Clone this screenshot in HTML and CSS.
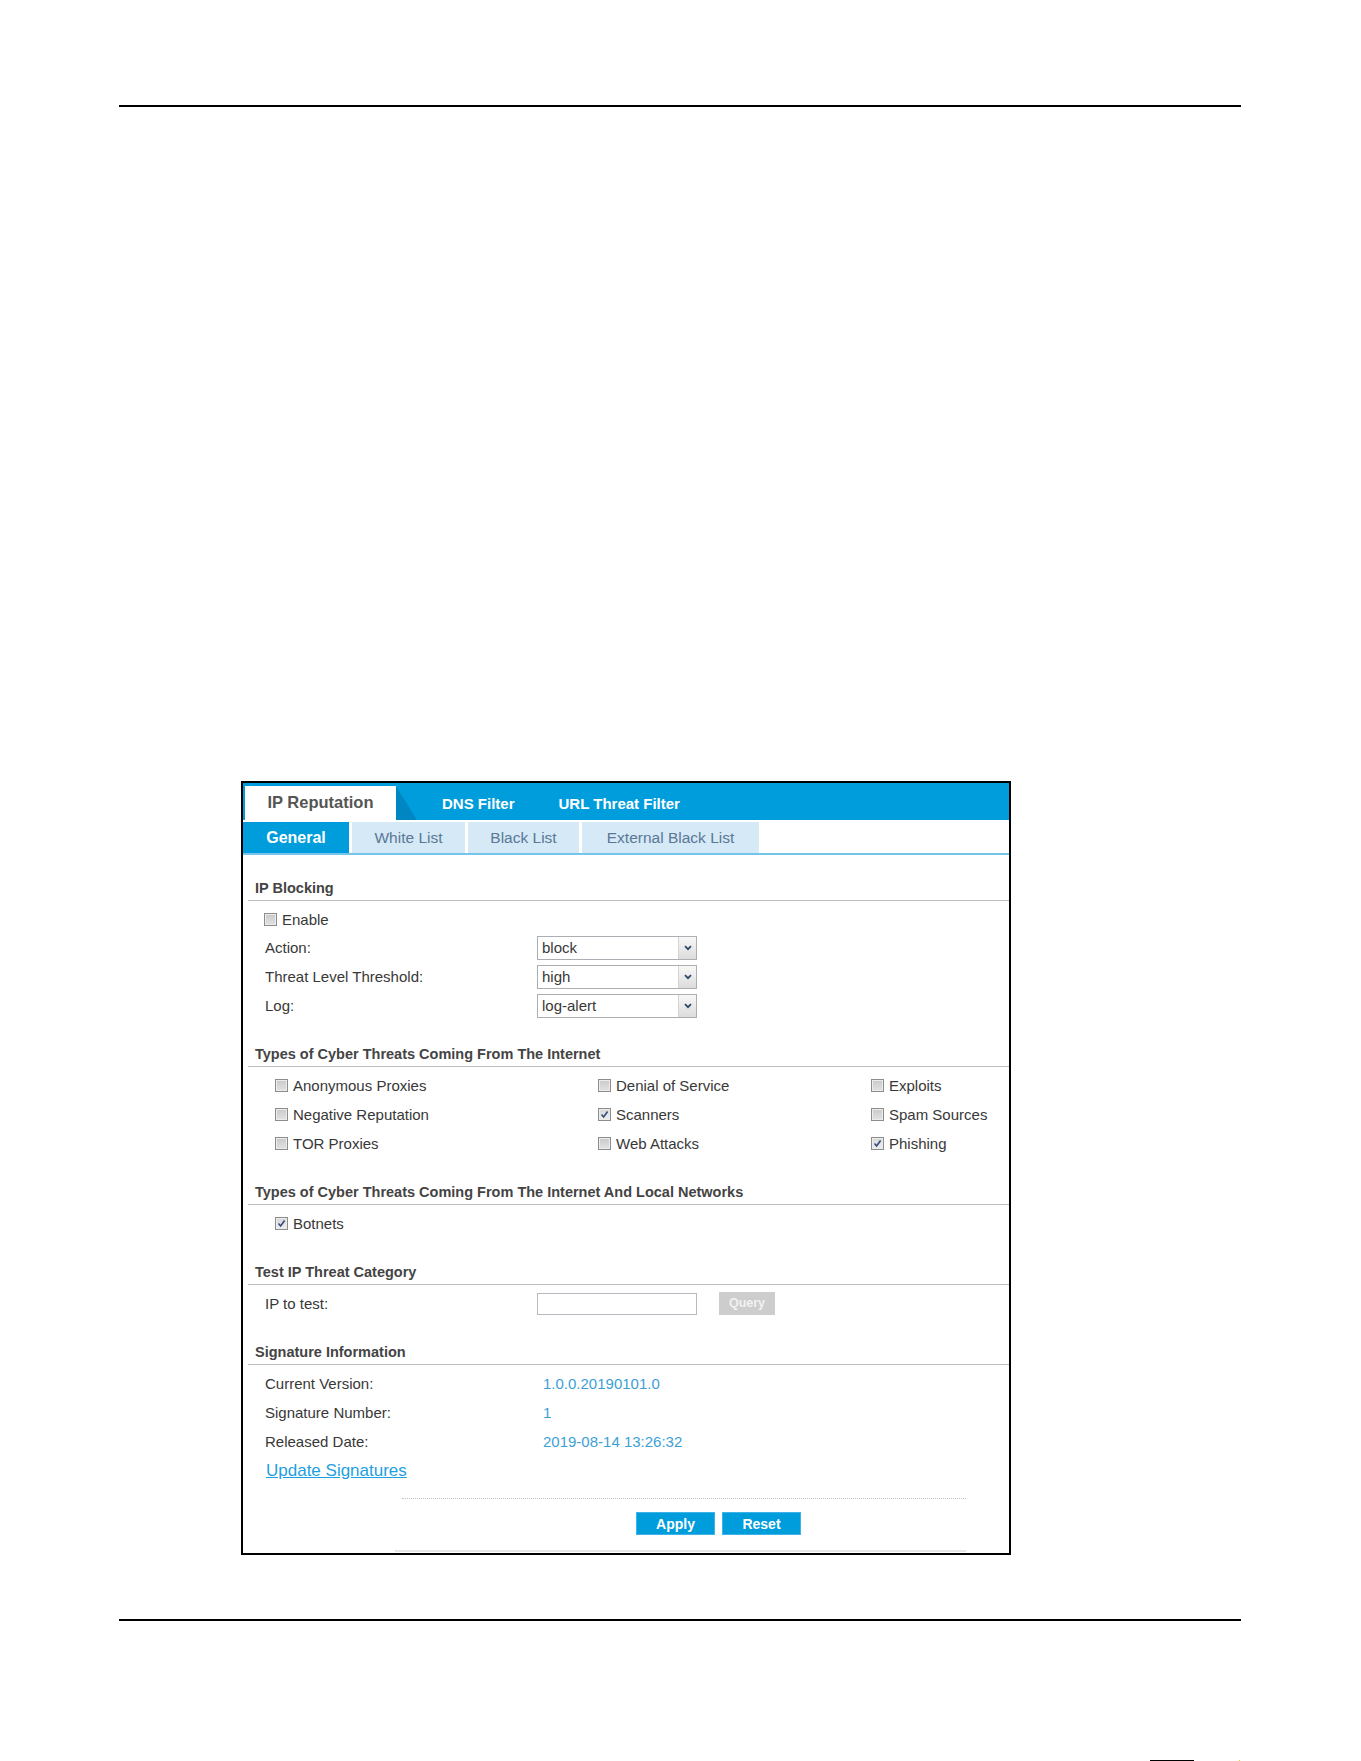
FILE: index.html
```html
<!DOCTYPE html>
<html lang="en">
  <head>
    <meta charset="UTF-8" />
    <meta name="viewport" content="width=device-width, initial-scale=1.0" />
    <title>IP Reputation</title>
    <link rel="stylesheet" href="styles.css">
  </head>
  <body>
    <div class="page">
      <div class="rule rule-top"></div>

      <div class="shot">
        <!-- hovedfaner -->
        <nav class="tabs">
          <span class="tab valgt">IP Reputation</span>
          <span class="slant"></span>
          <span class="tab first">DNS Filter</span>
          <span class="tab">URL Threat Filter</span>
        </nav>
        <!-- underfaner -->
        <nav class="subtabs">
          <span class="subtab valgt general">General</span>
          <span class="subtab white">White List</span>
          <span class="subtab black">Black List</span>
          <span class="subtab external">External Black List</span>
        </nav>

        <section class="group">
          <h3>IP Blocking</h3>
          <div class="rows">
            <div class="row short">
              <label class="check"><span class="cb"></span>Enable</label>
            </div>
            <div class="row">
              <span class="label">Action:</span>
              <span class="select"><span class="val">block</span><span class="arrow"><svg width="8" height="6" viewBox="0 0 8 6"><polyline points="1,1.2 4,4.2 7,1.2" fill="none" stroke="#30466a" stroke-width="1.8"/></svg></span></span>
            </div>
            <div class="row">
              <span class="label">Threat Level Threshold:</span>
              <span class="select"><span class="val">high</span><span class="arrow"><svg width="8" height="6" viewBox="0 0 8 6"><polyline points="1,1.2 4,4.2 7,1.2" fill="none" stroke="#30466a" stroke-width="1.8"/></svg></span></span>
            </div>
            <div class="row">
              <span class="label">Log:</span>
              <span class="select"><span class="val">log-alert</span><span class="arrow"><svg width="8" height="6" viewBox="0 0 8 6"><polyline points="1,1.2 4,4.2 7,1.2" fill="none" stroke="#30466a" stroke-width="1.8"/></svg></span></span>
            </div>
          </div>
        </section>

        <section class="group">
          <h3>Types of Cyber Threats Coming From The Internet</h3>
          <div class="rows grid">
            <label class="check"><span class="cb"></span>Anonymous Proxies</label>
            <label class="check"><span class="cb"></span>Denial of Service</label>
            <label class="check"><span class="cb"></span>Exploits</label>
            <label class="check"><span class="cb"></span>Negative Reputation</label>
            <label class="check"><span class="cb on"><svg width="11" height="11" viewBox="0 0 11 11"><polyline points="2.5,5.5 4.6,8 8.6,2.6" fill="none" stroke="#34497a" stroke-width="1.6"/></svg></span>Scanners</label>
            <label class="check"><span class="cb"></span>Spam Sources</label>
            <label class="check"><span class="cb"></span>TOR Proxies</label>
            <label class="check"><span class="cb"></span>Web Attacks</label>
            <label class="check"><span class="cb on"><svg width="11" height="11" viewBox="0 0 11 11"><polyline points="2.5,5.5 4.6,8 8.6,2.6" fill="none" stroke="#34497a" stroke-width="1.6"/></svg></span>Phishing</label>
          </div>
        </section>

        <section class="group">
          <h3>Types of Cyber Threats Coming From The Internet And Local Networks</h3>
          <div class="rows">
            <div class="row indent">
              <label class="check"><span class="cb on"><svg width="11" height="11" viewBox="0 0 11 11"><polyline points="2.5,5.5 4.6,8 8.6,2.6" fill="none" stroke="#34497a" stroke-width="1.6"/></svg></span>Botnets</label>
            </div>
          </div>
        </section>

        <section class="group">
          <h3>Test IP Threat Category</h3>
          <div class="rows">
            <div class="row">
              <span class="label">IP to test:</span>
              <span class="input"></span>
              <span class="query">Query</span>
            </div>
          </div>
        </section>

        <section class="group">
          <h3>Signature Information</h3>
          <div class="rows">
            <div class="row">
              <span class="label wide">Current Version:</span>
              <span class="value">1.0.0.20190101.0</span>
            </div>
            <div class="row">
              <span class="label wide">Signature Number:</span>
              <span class="value">1</span>
            </div>
            <div class="row">
              <span class="label wide">Released Date:</span>
              <span class="value">2019-08-14 13:26:32</span>
            </div>
            <div class="row">
              <a class="link" href="#">Update Signatures</a>
            </div>
          </div>
        </section>

        <div class="footer">
          <div class="dots"></div>
          <div class="buttons">
            <button>Apply</button>
            <button>Reset</button>
          </div>
          <div class="footline"></div>
        </div>
      </div>

      <div class="rule rule-bottom"></div>

      <div class="edge">
        <span class="edge-line"></span>
        <span class="edge-dot"></span>
      </div>
    </div>
  </body>
</html>
```

FILE: styles.css
```css
* {
  box-sizing: border-box;
  margin: 0;
  padding: 0;
}

body {
  background-color: #fff;
  font-family: "Liberation Sans", Arial, sans-serif;
  font-size: 15px;
  color: #383838;
}

.page {
  width: 1361px;
  height: 1761px;
  overflow: hidden;
}

/* sidens linjer top og bund */
.rule {
  height: 2px;
  width: 1122px;
  margin-left: 119px;
  background-color: #000;
}
.rule-top {
  margin-top: 105px;
}
.rule-bottom {
  margin-top: 64px;
}

.shot {
  width: 770px;
  margin: 674px 0 0 241px;
  border: 2px solid #000;
  padding-bottom: 1px;
}

/* hovedfaner */
.tabs {
  display: flex;
  align-items: flex-end;
  height: 37px;
  background-color: #009ddc;
}
.tab {
  height: 34px;
  line-height: 35px;
  padding: 0 22px;
  font-size: 15px;
  font-weight: bold;
  color: #fff;
}
.tab.first {
  margin-left: 3px;
}
.tab.valgt {
  width: 151px;
  margin-left: 2px;
  padding: 0;
  text-align: center;
  line-height: 33px;
  font-size: 16.5px;
  color: #555;
  background-color: #fff;
}
.slant {
  width: 0;
  height: 0;
  border-bottom: 34px solid #0087c3;
  border-right: 21px solid transparent;
}

/* underfaner */
.subtabs {
  display: flex;
  gap: 3px;
  margin-top: 2px;
  height: 33px;
  border-bottom: 2px solid #74c4ec;
}
.subtab {
  height: 31px;
  line-height: 31px;
  text-align: center;
  font-size: 15.5px;
  color: #5b7895;
  background-color: #d5e9f7;
}
.subtab.valgt {
  font-size: 16px;
  font-weight: bold;
  color: #fff;
  background-color: #009ddc;
}
.general {
  width: 106px;
}
.white {
  width: 113px;
}
.black {
  width: 111px;
}
.external {
  width: 177px;
}

/* sektioner */
.group {
  margin-top: 21px;
}
.group + .group {
  margin-top: 22px;
}
h3 {
  height: 25px;
  line-height: 24px;
  margin-left: 5px;
  padding-left: 7px;
  border-bottom: 1px solid #bdbdbd;
  font-size: 14.5px;
  font-weight: bold;
  color: #444;
}
.rows {
  padding-top: 4px;
}
.row {
  display: flex;
  align-items: center;
  height: 29px;
  padding-left: 22px;
}
.row.short {
  height: 28px;
  padding-left: 21px;
}
.row.indent {
  padding-left: 32px;
}
.label {
  width: 272px;
}
.label.wide {
  width: 275px;
}

.grid {
  display: grid;
  grid-template-columns: 323px 273px auto;
  grid-auto-rows: 29px;
  padding-left: 32px;
}

.check {
  display: flex;
  align-items: center;
}
.cb {
  display: flex;
  align-items: center;
  justify-content: center;
  width: 13px;
  height: 13px;
  margin-right: 5px;
  border: 1px solid #8c8c8c;
  box-shadow: inset 0 0 0 1px #ececec;
  background: linear-gradient(#c9c9c9, #e2e2e2);
}
.cb.on {
  background: linear-gradient(#d8d8d8, #eeeeee);
}

/* dropdown */
.select {
  display: flex;
  width: 160px;
  height: 24px;
  border: 1px solid #acaeb4;
  background-color: #fff;
}
.val {
  flex: 1;
  padding-left: 4px;
  line-height: 22px;
}
.arrow {
  display: flex;
  align-items: center;
  justify-content: center;
  width: 18px;
  border-left: 1px solid #d4d4d4;
  background: linear-gradient(#f8f8f8, #dcdcdc);
}

.input {
  width: 160px;
  height: 22px;
  border: 1px solid #b6bac3;
  background-color: #fff;
}
.query {
  width: 56px;
  height: 23px;
  margin-left: 22px;
  line-height: 23px;
  text-align: center;
  font-size: 12.5px;
  font-weight: bold;
  color: #f2f2f2;
  background-color: #cdcdcd;
}

.value {
  padding-left: 3px;
  color: #3d9fd6;
}
.link {
  margin-left: 1px;
  font-size: 17px;
  color: #1e9fe0;
  text-decoration: underline;
}

/* knapper i bunden */
.footer {
  width: 571px;
  margin: 13px 0 0 152px;
}
.dots {
  margin-left: 7px;
  border-top: 1px dotted #c6c6c6;
}
.buttons {
  display: flex;
  gap: 7px;
  padding: 13px 0 0 241px;
}
button {
  width: 79px;
  height: 23px;
  border: 1px solid #3fb3e8;
  background-color: #009ddc;
  font-family: "Liberation Sans", Arial, sans-serif;
  font-size: 14px;
  font-weight: bold;
  color: #fff;
}
.footline {
  height: 2px;
  margin-top: 15px;
  background-color: #e6e6e6;
}

/* kant af næste side */
.edge {
  display: flex;
  margin: 139px 0 0 1150px;
  height: 1px;
}
.edge-line {
  width: 44px;
  background-color: #000;
}
.edge-dot {
  width: 1px;
  margin-left: 45px;
  background-color: #f2d21c;
}
```
